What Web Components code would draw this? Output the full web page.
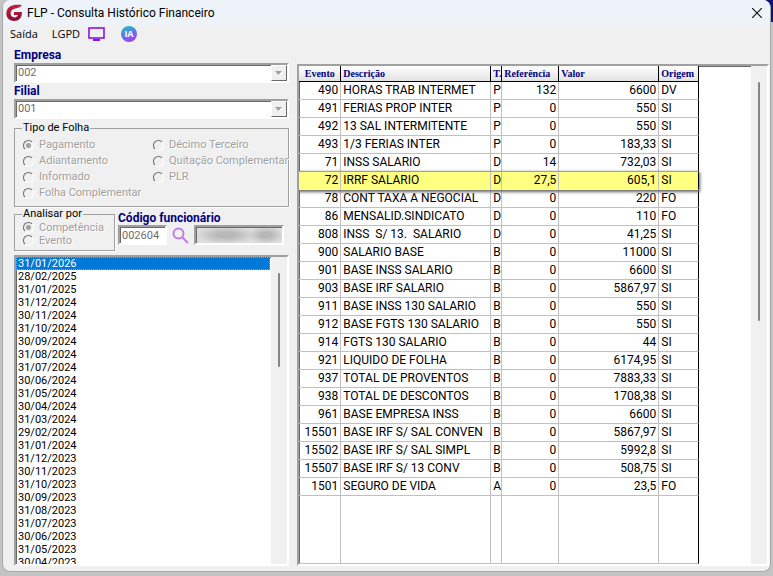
<!DOCTYPE html>
<html lang="pt-BR">
<head>
<meta charset="utf-8">
<title>FLP - Consulta Histórico Financeiro</title>
<style>
    html, body {
        height: 100%;
        margin: 0;
    }
    body {
        background: linear-gradient(#10107c, #10107c) right top / 8px 22px no-repeat, #c4c4c4;
        font-family: Roboto, "Liberation Sans", sans-serif;
        font-size: 12px;
        line-height: 16px;
        color: #000;
    }
</style>
</head>
<body>
<flp-window caption="FLP - Consulta Histórico Financeiro">
    <flp-menu slot="menu"></flp-menu>
    <flp-filters slot="side">
        <flp-combo label="Empresa" value="002"></flp-combo>
        <flp-combo label="Filial" value="001"></flp-combo>
        <flp-radios legend="Tipo de Folha" rows="4" options="Pagamento|Adiantamento|Informado|Folha Complementar|Décimo Terceiro|Quitação Complementar|PLR"></flp-radios>
        <flp-employee code="002604">
            <flp-radios compact legend="Analisar por" rows="2" options="Competência|Evento"></flp-radios>
        </flp-employee>
        <flp-dates></flp-dates>
    </flp-filters>
    <flp-grid></flp-grid>
</flp-window>

<script>
const SUNKEN = `
    border: 2px solid;
    border-color: #a0a0a0 #fff #fff #a0a0a0;
    box-shadow: inset 1px 1px 0 #696969;
`;

function render(el, html) {
    const root = el.attachShadow({ mode: 'open' });
    const template = document.createElement('template');
    template.innerHTML = html;
    root.appendChild(template.content.cloneNode(true));
    return root;
}

class FlpWindow extends HTMLElement {
    connectedCallback() {
        render(this, `
            <style>
                :host {
                    display: block;
                    box-sizing: border-box;
                    height: 100%;
                    padding: 0 2px 4px 2px;
                }
                .frame {
                    box-sizing: border-box;
                    height: 100%;
                    display: flex;
                    flex-direction: column;
                    background: #f0f0f0;
                    border: 1px solid #a8a8a8;
                    border-top: 0;
                    border-radius: 8px;
                    overflow: hidden;
                }
                header {
                    display: flex;
                    align-items: center;
                    gap: 4px;
                    height: 25px;
                    padding: 0 8px 0 3px;
                    background: #eef3fa;
                }
                h1 {
                    flex: 1;
                    margin: 0;
                    font-size: 12px;
                    font-weight: 400;
                }
                button {
                    display: flex;
                    padding: 0;
                    border: 0;
                    background: none;
                }
                main {
                    flex: 1;
                    min-height: 0;
                    display: flex;
                    gap: 8px;
                    padding: 0 1px 5px 11px;
                }
                ::slotted(flp-grid) {
                    margin-top: 21px;
                }
            </style>
            <div class="frame">
                <header>
                    <svg width="17" height="18" viewBox="0 0 17 18">
                        <defs><linearGradient id="g" x1="0" y1="0" x2="0" y2="1">
                            <stop offset="0" stop-color="#c8203f"/><stop offset="1" stop-color="#8a1030"/>
                        </linearGradient></defs>
                        <path d="M16 1C9 0 3 1 1 6c-2 6 1 11 7 11 5 0 8-3 8-9H8v3h4c-1 2-3 3-5 2-3-1-3-5-1-7 2-2 7-1 10-5z" fill="url(#g)"/>
                    </svg>
                    <h1></h1>
                    <button aria-label="Fechar">
                        <svg width="10" height="10" viewBox="0 0 10 10"><path d="M0 0l10 10M10 0L0 10" stroke="#111" stroke-width="1.2"/></svg>
                    </button>
                </header>
                <slot name="menu"></slot>
                <main>
                    <slot name="side"></slot>
                    <slot></slot>
                </main>
            </div>
        `).querySelector('h1').textContent = this.getAttribute('caption');
    }
}

class FlpMenu extends HTMLElement {
    connectedCallback() {
        render(this, `
            <style>
                :host {
                    display: flex;
                    align-items: center;
                    height: 18px;
                    padding-left: 7px;
                }
                button {
                    display: flex;
                    padding: 0;
                    border: 0;
                    background: none;
                    font: 11px/16px "Open Sans", "Noto Sans", sans-serif;
                    color: #000;
                }
                .exit { margin-right: 14px; }
                .lgpd { margin-right: 8px; }
                .screen { margin-right: 16px; }
            </style>
            <button class="exit">Saída</button>
            <button class="lgpd">LGPD</button>
            <button class="screen" aria-label="Monitor">
                <svg width="17" height="14" viewBox="0 0 17 14">
                    <rect x="1" y="1" width="15" height="10" fill="none" stroke="#8a10f0" stroke-width="1.6"/>
                    <path d="M5 12h7v2H5z" fill="#8a10f0"/>
                </svg>
            </button>
            <button aria-label="Assistente IA">
                <svg width="16" height="16" viewBox="0 0 16 16">
                    <defs><linearGradient id="g" x1="0" y1="0" x2=".4" y2="1">
                        <stop offset="0" stop-color="#20c5c0"/><stop offset=".5" stop-color="#5085e0"/><stop offset="1" stop-color="#a040f8"/>
                    </linearGradient></defs>
                    <circle cx="8" cy="8" r="8" fill="url(#g)"/>
                    <text x="8" y="11" text-anchor="middle" font-family="Open Sans, sans-serif" font-size="9" font-weight="700" fill="#fff">IA</text>
                </svg>
            </button>
        `);
    }
}

class FlpFilters extends HTMLElement {
    connectedCallback() {
        render(this, `
            <style>
                :host {
                    flex: 0 0 274px;
                    min-height: 0;
                    display: flex;
                    flex-direction: column;
                    padding-top: 4px;
                }
                ::slotted(flp-dates) {
                    flex: 1;
                    margin-top: 4px;
                }
            </style>
            <slot></slot>
        `);
    }
}

class FlpCombo extends HTMLElement {
    connectedCallback() {
        const root = render(this, `
            <style>
                :host { display: block; }
                label {
                    display: block;
                    font-weight: 700;
                    color: #000080;
                }
                .field {
                    display: flex;
                    box-sizing: border-box;
                    height: 20px;
                    background: #fff;
                    ${SUNKEN}
                }
                select {
                    flex: 1;
                    appearance: none;
                    padding: 0 2px;
                    border: 0;
                    background: none;
                    font: inherit;
                    font-size: 11px;
                    color: #6d6d6d;
                    opacity: 1;
                }
                .arrow {
                    display: flex;
                    align-items: center;
                    justify-content: center;
                    box-sizing: border-box;
                    width: 16px;
                    background: #f0f0f0;
                    border: 1px solid;
                    border-color: #fff #696969 #696969 #fff;
                }
            </style>
            <label for="s"></label>
            <div class="field">
                <select id="s" disabled><option></option></select>
                <span class="arrow"><svg width="8" height="5" viewBox="0 0 8 5"><path d="M1 1h7L4.500 5z" fill="#fff"/><path d="M0 0h7L3.500 4z" fill="#a0a0a0"/></svg></span>
            </div>
        `);
        root.querySelector('label').textContent = this.getAttribute('label');
        root.querySelector('option').textContent = this.getAttribute('value');
    }
}

class FlpRadios extends HTMLElement {
    connectedCallback() {
        const options = this.getAttribute('options').split('|');
        render(this, `
            <style>
                :host {
                    display: block;
                    min-width: 0;
                    margin-top: 2px;
                    font-size: 11px;
                }
                fieldset {
                    box-sizing: border-box;
                    min-width: 0;
                    height: 86px;
                    margin: 0;
                    padding: 2px 0 0 8px;
                    border: 1px solid #a0a0a0;
                    box-shadow: 1px 1px 0 #fff;
                }
                legend {
                    margin-left: -1px;
                    padding: 0 1px;
                    line-height: 14px;
                }
                .options {
                    display: grid;
                    grid-auto-flow: column;
                    grid-template-rows: repeat(${this.getAttribute('rows')}, 16px);
                    grid-template-columns: 130px;
                }
                label {
                    display: flex;
                    align-items: center;
                    gap: 5px;
                    white-space: nowrap;
                    color: #a0a0a0;
                    text-shadow: 1px 1px 0 #fff;
                }
                input {
                    appearance: none;
                    flex: none;
                    box-sizing: border-box;
                    width: 11px;
                    height: 11px;
                    margin: 0;
                    border: 1px solid;
                    border-color: #696969 #fff #fff #696969;
                    border-radius: 50%;
                }
                input:checked {
                    background: radial-gradient(circle, #a0a0a0 2px, transparent 3px);
                }
                :host([compact]) { margin-top: 0; }
                :host([compact]) fieldset { height: 44px; padding-top: 0; }
                :host([compact]) .options {
                    grid-template-rows: repeat(2, 13px);
                    grid-template-columns: 1fr;
                }
            </style>
            <fieldset disabled>
                <legend>${this.getAttribute('legend')}</legend>
                <div class="options">
                    ${options.map((o, i) => `<label><input type="radio" name="r" ${i ? '' : 'checked'}>${o}</label>`).join('')}
                </div>
            </fieldset>
        `);
    }
}

class FlpEmployee extends HTMLElement {
    connectedCallback() {
        render(this, `
            <style>
                :host {
                    display: grid;
                    grid-template-columns: 101px 1fr;
                    gap: 3px;
                }
                .code { padding-top: 4px; }
                label {
                    display: block;
                    font-weight: 700;
                    line-height: 14px;
                    color: #000080;
                }
                .row {
                    display: flex;
                    align-items: center;
                }
                input {
                    box-sizing: border-box;
                    height: 20px;
                    width: 49px;
                    padding: 0 2px;
                    border-radius: 0;
                    background: #fff;
                    font: inherit;
                    font-size: 11px;
                    color: #6d6d6d;
                    ${SUNKEN}
                }
                button {
                    display: flex;
                    margin: 0 5px;
                    padding: 0;
                    border: 0;
                    background: none;
                }
                .name {
                    width: 90px;
                    padding: 0;
                    background:
                        radial-gradient(ellipse 30px 9px at 30px 8px, #b8b8b8 30%, transparent),
                        radial-gradient(ellipse 18px 9px at 70px 8px, #b8b8b8 30%, transparent),
                        #dedede;
                }
            </style>
            <slot></slot>
            <div class="code">
                <label for="code">Código funcionário</label>
                <div class="row">
                    <input id="code" disabled value="${this.getAttribute('code')}">
                    <button aria-label="Pesquisar"><svg width="17" height="17" viewBox="0 0 17 17" fill="none" stroke="#bd7de8" stroke-width="2"><circle cx="6.500" cy="6.500" r="5"/><path d="M10 10l6 6"/></svg></button>
                    <input class="name" disabled aria-label="Nome">
                </div>
            </div>
        `);
    }
}

const dates = [
    '31/01/2026', '28/02/2025', '31/01/2025', '31/12/2024', '30/11/2024', '31/10/2024',
    '30/09/2024', '31/08/2024', '31/07/2024', '30/06/2024', '31/05/2024', '30/04/2024',
    '31/03/2024', '29/02/2024', '31/01/2024', '31/12/2023', '30/11/2023', '31/10/2023',
    '30/09/2023', '31/08/2023', '31/07/2023', '30/06/2023', '31/05/2023', '30/04/2023'
];

class FlpDates extends HTMLElement {
    connectedCallback() {
        render(this, `
            <style>
                :host {
                    display: flex;
                    min-height: 0;
                    overflow: hidden;
                    background: #fff;
                    font-size: 11px;
                    ${SUNKEN}
                }
                ul {
                    flex: 1;
                    margin: 0;
                    padding: 0;
                    list-style: none;
                }
                li {
                    margin-right: 1px;
                    padding-left: 2px;
                    line-height: 13px;
                }
                li[aria-selected=true] {
                    background: #0078d7;
                    color: #fff;
                    outline: 1px dotted #ff8728;
                    outline-offset: -1px;
                }
                .bar {
                    width: 16px;
                    background: #f0f0f0;
                }
                .thumb {
                    width: 2px;
                    height: 94px;
                    margin: 16px 7px;
                    border-radius: 1px;
                    background: #858585;
                }
            </style>
            <ul role="listbox" aria-label="Datas">
                ${dates.map((d, i) => `<li role="option" aria-selected="${i === 0}">${d}</li>`).join('')}
            </ul>
            <div class="bar"><div class="thumb"></div></div>
        `);
    }
}

const rows = [
    ['490', 'HORAS TRAB INTERMET', 'P', '132', '6600', 'DV'],
    ['491', 'FERIAS PROP INTER', 'P', '0', '550', 'SI'],
    ['492', '13 SAL INTERMITENTE', 'P', '0', '550', 'SI'],
    ['493', '1/3 FERIAS INTER', 'P', '0', '183,33', 'SI'],
    ['71', 'INSS SALARIO', 'D', '14', '732,03', 'SI'],
    ['72', 'IRRF SALARIO', 'D', '27,5', '605,1', 'SI'],
    ['78', 'CONT TAXA A NEGOCIAL', 'D', '0', '220', 'FO'],
    ['86', 'MENSALID.SINDICATO', 'D', '0', '110', 'FO'],
    ['808', 'INSS  S/ 13.  SALARIO', 'D', '0', '41,25', 'SI'],
    ['900', 'SALARIO BASE', 'B', '0', '11000', 'SI'],
    ['901', 'BASE INSS SALARIO', 'B', '0', '6600', 'SI'],
    ['903', 'BASE IRF SALARIO', 'B', '0', '5867,97', 'SI'],
    ['911', 'BASE INSS 130 SALARIO', 'B', '0', '550', 'SI'],
    ['912', 'BASE FGTS 130 SALARIO', 'B', '0', '550', 'SI'],
    ['914', 'FGTS 130 SALARIO', 'B', '0', '44', 'SI'],
    ['921', 'LIQUIDO DE FOLHA', 'B', '0', '6174,95', 'SI'],
    ['937', 'TOTAL DE PROVENTOS', 'B', '0', '7883,33', 'SI'],
    ['938', 'TOTAL DE DESCONTOS', 'B', '0', '1708,38', 'SI'],
    ['961', 'BASE EMPRESA INSS', 'B', '0', '6600', 'SI'],
    ['15501', 'BASE IRF S/ SAL CONVEN', 'B', '0', '5867,97', 'SI'],
    ['15502', 'BASE IRF S/ SAL SIMPL', 'B', '0', '5992,8', 'SI'],
    ['15507', 'BASE IRF S/ 13 CONV', 'B', '0', '508,75', 'SI'],
    ['1501', 'SEGURO DE VIDA', 'A', '0', '23,5', 'FO']
];

class FlpGrid extends HTMLElement {
    connectedCallback() {
        const heads = ['Evento', 'Descrição', 'T.', 'Referência', 'Valor', 'Origem'];
        render(this, `
            <style>
                :host {
                    flex: 1;
                    min-width: 0;
                    display: flex;
                    justify-content: space-between;
                    overflow: hidden;
                    background: #fff;
                    ${SUNKEN}
                }
                table {
                    width: 400px;
                    height: 100%;
                    table-layout: fixed;
                    border-collapse: separate;
                    border-spacing: 0;
                }
                th, td {
                    box-sizing: border-box;
                    padding: 0 2px;
                    overflow: hidden;
                    white-space: pre;
                    text-align: left;
                    border-right: 1px solid #c0c0c0;
                }
                th {
                    height: 16px;
                    font: 700 10px/15px "Liberation Serif", serif;
                    color: #000080;
                    background: linear-gradient(#fff, #e2e2e2);
                    border-right-color: #000;
                    border-bottom: 1px solid #000;
                }
                th:first-child { text-align: center; }
                td {
                    height: 18px;
                    line-height: 17px;
                    border-bottom: 1px solid #c0c0c0;
                }
                td:last-child { border-right-color: #000; }
                td:nth-child(1), td:nth-child(4), td:nth-child(5) { text-align: right; }
                tr.current {
                    position: relative;
                    box-shadow: 0 1px 3px 1px #666;
                }
                tr.current td {
                    background: #ffff80;
                    border-bottom-color: #ffff80;
                }
                tr.rest td { height: auto; }
                .bar {
                    width: 16px;
                    background: #f0f0f0;
                }
                .thumb {
                    width: 2px;
                    height: 239px;
                    margin: 16px 7px;
                    border-radius: 1px;
                    background: #858585;
                }
            </style>
            <table>
                <colgroup><col width="42"><col width="150"><col width="11"><col width="57"><col width="100"><col width="40"></colgroup>
                <thead><tr>${heads.map(h => `<th>${h}</th>`).join('')}</tr></thead>
                <tbody>
                    ${rows.map(r => `<tr class="${r[0] === '72' ? 'current' : ''}">${r.map(c => `<td>${c}</td>`).join('')}</tr>`).join('')}
                    <tr class="rest">${heads.map(() => '<td></td>').join('')}</tr>
                </tbody>
            </table>
            <div class="bar"><div class="thumb"></div></div>
        `);
    }
}

customElements.define('flp-window', FlpWindow);
customElements.define('flp-menu', FlpMenu);
customElements.define('flp-filters', FlpFilters);
customElements.define('flp-combo', FlpCombo);
customElements.define('flp-radios', FlpRadios);
customElements.define('flp-employee', FlpEmployee);
customElements.define('flp-dates', FlpDates);
customElements.define('flp-grid', FlpGrid);
</script>
</body>
</html>
